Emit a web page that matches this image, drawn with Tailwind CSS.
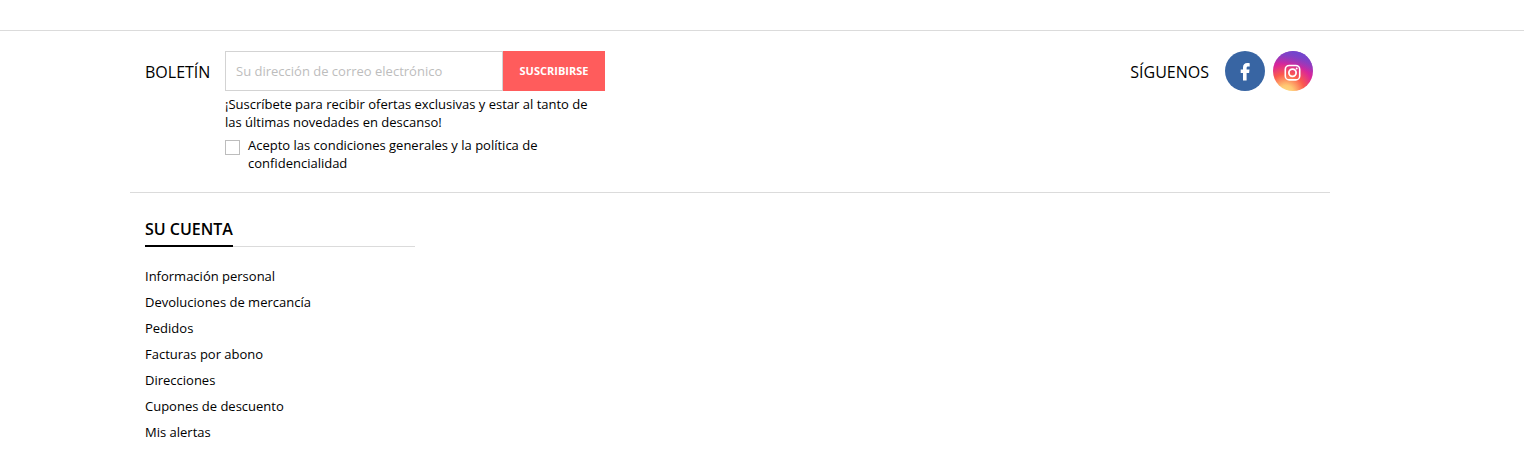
<!DOCTYPE html>
<html lang="es">
    <head>
        <meta charset="UTF-8">
        <meta name="viewport" content="width=device-width, initial-scale=1.0">
        <title>Su cuenta</title>
        <script src="https://cdn.jsdelivr.net/npm/@tailwindcss/browser@4"></script>
    </head>
    <body class="bg-white text-black font-['Open_Sans',sans-serif] text-[13px] leading-[18px]">
        <footer class="mt-[30px] border-t border-[#dbdbdb] pr-16">
            <div class="max-w-[1200px] mx-auto">

                <!-- Boletín y redes sociales -->
                <div class="flex justify-between items-start px-[15px] pt-5 pb-5 border-b border-[#dbdbdb]">
                    <form class="flex" onsubmit="return false">
                        <label for="email" class="w-20 text-base leading-10 pt-px">BOLETÍN</label>
                        <div class="w-[380px]">
                            <div class="flex h-10">
                                <input type="email" id="email" placeholder="Su dirección de correo electrónico" class="flex-1 min-w-0 px-[10px] border border-[#d3d3d3] placeholder:text-[#bdbdbd] focus:outline-none">
                                <button type="submit" class="w-[102px] bg-[#ff5c5c] text-white text-[11px] font-bold hover:bg-red-500">SUSCRIBIRSE</button>
                            </div>
                            <p class="mt-1">¡Suscríbete para recibir ofertas exclusivas y estar al tanto de las últimas novedades en descanso!</p>
                            <div class="flex items-start mt-[5px]">
                                <input type="checkbox" id="terms" class="appearance-none shrink-0 w-[15px] h-[15px] mt-1 mr-2 border border-[#bdbdbd] bg-white checked:bg-black">
                                <label for="terms" class="pr-8">Acepto las condiciones generales y la política de confidencialidad</label>
                            </div>
                        </div>
                    </form>

                    <div class="flex items-start gap-2 pr-[2px]">
                        <h4 class="text-base leading-10 pt-px mr-2">SÍGUENOS</h4>
                        <a href="#" aria-label="Facebook" class="block">
                            <svg class="w-10 h-10" viewBox="0 0 40 40">
                                <circle cx="20" cy="20" r="20" fill="#3865a3"/>
                                <path d="M18 29.6v-7.6h-2.3v-3.4h2.3v-2.1c0-2.8 1.6-4.4 4.2-4.4 1 0 1.8.1 2.5.2v3.1h-1.5c-1.2 0-1.6.6-1.6 1.5v1.7h2.9l-.4 3.4h-2.5v7.6z" fill="#fff"/>
                            </svg>
                        </a>
                        <a href="#" aria-label="Instagram" class="block">
                            <svg class="w-10 h-10" viewBox="0 0 40 40">
                                <defs>
                                    <radialGradient id="igWarm" gradientUnits="userSpaceOnUse" cx="13" cy="42" r="38">
                                        <stop offset="0" stop-color="#ffdd85"/>
                                        <stop offset=".2" stop-color="#ffc873"/>
                                        <stop offset=".5" stop-color="#fb5a4d"/>
                                        <stop offset=".78" stop-color="#d9259a"/>
                                        <stop offset="1" stop-color="#a834b5"/>
                                    </radialGradient>
                                    <linearGradient id="igCool" gradientUnits="userSpaceOnUse" x1="25" y1="0" x2="20" y2="17">
                                        <stop offset="0" stop-color="#6a48d0"/>
                                        <stop offset="1" stop-color="#6a48d0" stop-opacity="0"/>
                                    </linearGradient>
                                </defs>
                                <circle cx="20" cy="20" r="20" fill="url(#igWarm)"/>
                                <circle cx="20" cy="20" r="20" fill="url(#igCool)"/>
                                <rect x="12.3" y="14.5" width="14.4" height="14.4" rx="4" fill="none" stroke="#fff" stroke-width="1.6"/>
                                <circle cx="19.5" cy="21.7" r="3.6" fill="none" stroke="#fff" stroke-width="1.8"/>
                                <circle cx="23.7" cy="17.5" r="1" fill="#fff"/>
                            </svg>
                        </a>
                    </div>
                </div>

                <!-- Enlaces de la cuenta -->
                <div class="w-1/4 px-[15px] pt-5">
                    <div class="flex border-b border-[#dbdbdb]">
                        <h4 class="-mb-px pt-1 pb-1 border-b-2 border-black text-base leading-6 font-semibold">SU CUENTA</h4>
                    </div>
                    <ul class="pt-4 leading-[26px]">
                        <li><a href="#" class="hover:underline">Información personal</a></li>
                        <li><a href="#" class="hover:underline">Devoluciones de mercancía</a></li>
                        <li><a href="#" class="hover:underline">Pedidos</a></li>
                        <li><a href="#" class="hover:underline">Facturas por abono</a></li>
                        <li><a href="#" class="hover:underline">Direcciones</a></li>
                        <li><a href="#" class="hover:underline">Cupones de descuento</a></li>
                        <li><a href="#" class="hover:underline">Mis alertas</a></li>
                    </ul>
                </div>

            </div>
        </footer>
    </body>
</html>
